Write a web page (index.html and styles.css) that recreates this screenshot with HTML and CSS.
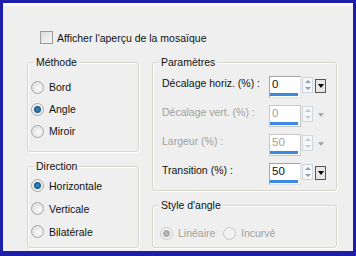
FILE: index.html
```html
<!DOCTYPE html>
<html lang="fr">
<head>
  <meta charset="UTF-8" />
  <title>Mosaïque</title>
  <link rel="stylesheet" href="styles.css">
</head>
<body>
  <div class="panel">
    <div class="check-row">
      <span class="checkbox"></span>
      <span>Afficher l'aperçu de la mosaïque</span>
    </div>

    <div class="columns">
      <div class="col-left">
        <div class="group methode">
          <span class="group-title">Méthode</span>
          <div class="radio"><span class="dot"></span>Bord</div>
          <div class="radio"><span class="dot on"></span>Angle</div>
          <div class="radio"><span class="dot"></span>Miroir</div>
        </div>
        <div class="group direction">
          <span class="group-title">Direction</span>
          <div class="radio"><span class="dot on"></span>Horizontale</div>
          <div class="radio"><span class="dot"></span>Verticale</div>
          <div class="radio"><span class="dot"></span>Bilatérale</div>
        </div>
      </div>

      <div class="col-right">
        <div class="group params">
          <span class="group-title">Paramètres</span>
          <div class="param">
            <span class="plabel">Décalage horiz. (%) :</span>
            <div class="spin">
              <div class="field"><span class="value">0</span><span class="bar" style="width:28px"></span></div>
              <div class="arrows"><span class="up"></span><span class="down"></span></div>
              <div class="drop"></div>
            </div>
          </div>
          <div class="param off">
            <span class="plabel">Décalage vert. (%) :</span>
            <div class="spin">
              <div class="field"><span class="value">0</span><span class="bar" style="width:28px"></span></div>
              <div class="arrows"><span class="up"></span><span class="down"></span></div>
              <div class="drop"></div>
            </div>
          </div>
          <div class="param off">
            <span class="plabel">Largeur (%) :</span>
            <div class="spin">
              <div class="field"><span class="value">50</span><span class="bar" style="width:28px"></span></div>
              <div class="arrows"><span class="up"></span><span class="down"></span></div>
              <div class="drop"></div>
            </div>
          </div>
          <div class="param">
            <span class="plabel">Transition (%) :</span>
            <div class="spin">
              <div class="field"><span class="value">50</span><span class="bar" style="width:28px"></span></div>
              <div class="arrows"><span class="up"></span><span class="down"></span></div>
              <div class="drop"></div>
            </div>
          </div>
        </div>
        <div class="group style">
          <span class="group-title">Style d'angle</span>
          <div class="radio-line">
            <div class="radio off"><span class="dot on"></span>Linéaire</div>
            <div class="radio off"><span class="dot"></span>Incurvé</div>
          </div>
        </div>
      </div>
    </div>
  </div>
</body>
</html>
```

FILE: styles.css
```css
body {
  margin: 0;
  width: 356px;
  height: 256px;
  box-sizing: border-box;
  padding: 3px 3px 5px 3px;
  background: #1e1eaa;
  font-family: "Liberation Sans", Arial, sans-serif;
  font-size: 10.5px;
  color: #111;
}

.panel {
  height: 100%;
  box-sizing: border-box;
  background: #efefef;
  border-top: 3px solid #fbfbfb;
  padding: 25px 0 0 24px;
}

.check-row {
  display: flex;
  align-items: center;
  margin-left: 13px;
  height: 13px;
}

.checkbox {
  width: 11px;
  height: 11px;
  border: 1px solid #9a9a9a;
  background: linear-gradient(135deg, #dcdcdc, #f8f8f8);
  margin-right: 4px;
}

.columns {
  display: flex;
  gap: 13px;
  margin-top: 18px;
}

.col-left {
  width: 112px;
  display: flex;
  flex-direction: column;
  gap: 14px;
}

.col-right {
  width: 185px;
  display: flex;
  flex-direction: column;
  gap: 14px;
}

.group {
  position: relative;
  box-sizing: border-box;
  border: 1px solid #d6d6ce;
  border-radius: 3px;
  box-shadow: inset 1px 1px 0 #fff, 1px 1px 0 #fff;
}

.group-title {
  position: absolute;
  top: -8px;
  left: 6px;
  padding: 0 2px;
  line-height: 14px;
  background: #efefef;
}

.methode { height: 90px; padding: 13px 0 0 3px; }
.direction { height: 82px; padding: 7px 0 0 3px; }
.params { height: 129px; padding: 13px 0 0 9px; }
.style { height: 43px; padding: 16px 0 0 7px; }

.radio {
  display: flex;
  align-items: center;
  height: 22px;
}

.direction .radio { height: 23px; }

.dot {
  width: 11px;
  height: 11px;
  border: 1px solid #a8a8a8;
  border-radius: 50%;
  background: radial-gradient(circle at 60% 60%, #fafafa, #d8d8d8);
  margin-right: 5px;
}

.dot.on {
  background: radial-gradient(circle, #3f8fc4 0, #1a5a8a 3px, #e8e8e8 4px, #f4f4f4 6px);
}

.radio.off { color: #a0a0a0; }
.radio.off .dot { border-color: #c8c8c8; background: #f2f2f2; }
.radio.off .dot.on { background: radial-gradient(circle, #bdbdbd 0, #a8a8a8 3px, #f2f2f2 4px); }

.radio-line {
  display: flex;
}

.radio-line .radio:first-child { width: 63px; }

.param {
  display: flex;
  align-items: flex-start;
  height: 29px;
}

.plabel {
  width: 107px;
  line-height: 14px;
}

.spin {
  display: flex;
  align-items: flex-start;
}

.field {
  position: relative;
  width: 30px;
  height: 20px;
  background: #fff;
  border: 1px solid #a5a5a5;
  border-right-color: #e2e2e2;
  border-bottom-color: #e2e2e2;
}

.value {
  display: block;
  padding: 1px 0 0 2px;
  line-height: 13px;
  font-size: 11.5px;
}

.bar {
  position: absolute;
  left: 0;
  bottom: 1px;
  height: 3px;
  background: #3b8ae0;
}

.arrows {
  display: flex;
  flex-direction: column;
  width: 9px;
  height: 14px;
  margin: 1px 0 0 1px;
  border: 1px solid #cfd6de;
  background: #f4f6f8;
}

.arrows span {
  flex: 1;
  display: flex;
  align-items: center;
  justify-content: center;
}

.arrows .up::before {
  content: "";
  border: 3px solid transparent;
  border-bottom: 3px solid #8aa0b8;
  border-top: 0;
}

.arrows .down::before {
  content: "";
  border: 3px solid transparent;
  border-top: 3px solid #8aa0b8;
  border-bottom: 0;
}

.drop {
  display: flex;
  align-items: center;
  justify-content: center;
  width: 9px;
  height: 12px;
  margin: 3px 0 0 2px;
  border: 1px solid #555;
  background: #e6e6e6;
}

.drop::before {
  content: "";
  border: 3px solid transparent;
  border-top: 4px solid #000;
  border-bottom: 0;
}

.param.off .plabel,
.param.off .value { color: #a0a0a0; }
.param.off .field { border-color: #c8c8c8; }
.param.off .arrows .up::before { border-bottom-color: #c0c8d0; }
.param.off .arrows .down::before { border-top-color: #c0c8d0; }
.param.off .drop { border-color: transparent; background: transparent; }
.param.off .drop::before { border-top-color: #a8a8a8; }
```
